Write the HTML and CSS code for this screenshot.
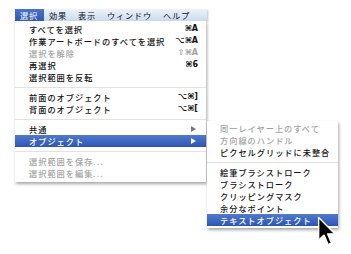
FILE: index.html
```html
<!DOCTYPE html>
<html lang="ja">
<head>
  <meta charset="UTF-8" />
  <title>選択メニュー</title>
  <link rel="stylesheet" href="styles.css">
</head>
<body>

  <div class="screen">
    <div class="menubar">
      <span class="title active">選択</span>
      <span class="title">効果</span>
      <span class="title">表示</span>
      <span class="title">ウィンドウ</span>
      <span class="title">ヘルプ</span>
    </div>

    <div class="menu">
      <div class="item"><span>すべてを選択</span><span class="key">⌘A</span></div>
      <div class="item"><span>作業アートボードのすべてを選択</span><span class="key">⌥⌘A</span></div>
      <div class="item off"><span>選択を解除</span><span class="key">⇧⌘A</span></div>
      <div class="item"><span>再選択</span><span class="key">⌘6</span></div>
      <div class="item"><span>選択範囲を反転</span></div>
      <div class="sep"></div>
      <div class="item"><span>前面のオブジェクト</span><span class="key">⌥⌘]</span></div>
      <div class="item"><span>背面のオブジェクト</span><span class="key">⌥⌘[</span></div>
      <div class="sep"></div>
      <div class="item"><span>共通</span><span class="arrow"></span></div>
      <div class="item hot"><span>オブジェクト</span><span class="arrow"></span></div>
      <div class="sep"></div>
      <div class="item off"><span>選択範囲を保存...</span></div>
      <div class="item off"><span>選択範囲を編集...</span></div>
    </div>

    <div class="menu sub">
      <div class="item off"><span>同一レイヤー上のすべて</span></div>
      <div class="item off"><span>方向線のハンドル</span></div>
      <div class="item"><span>ピクセルグリッドに未整合</span></div>
      <div class="sep"></div>
      <div class="item"><span>絵筆ブラシストローク</span></div>
      <div class="item"><span>ブラシストローク</span></div>
      <div class="item"><span>クリッピングマスク</span></div>
      <div class="item"><span>余分なポイント</span></div>
      <div class="item hot"><span>テキストオブジェクト</span></div>
    </div>

    <svg class="cursor" width="19" height="30" viewBox="0 0 13 21">
      <path d="M1 1 L1 17 L4.8 13.4 L7.6 20 L10 19 L7.3 12.5 L12.3 12.5 Z" fill="#000" stroke="#fff" stroke-width="1" stroke-linejoin="round"/>
    </svg>
  </div>

</body>
</html>
```

FILE: styles.css
```css
body {
  margin: 0; padding: 0;
  background: #fff; color: #111;
  font-family: 'Noto Sans CJK JP', sans-serif;
}
.screen {
  position: relative;
  width: 351px; height: 254px;
  padding: 9px 0 0 15px;
  box-sizing: border-box;
}
.menubar {
  display: flex; width: 192px; height: 12px;
  background: linear-gradient(#eaf2fb, #cadcef);
  font-size: 8.2px; line-height: 12px;
  letter-spacing: 0.8px;
  box-shadow: 1px 1px 2px rgba(0,0,0,0.25);
}
.title { padding: 0 6px 0 5px; white-space: nowrap; }
.title.active {
  background: linear-gradient(#4b74c9, #2e58b5);
  color: #fff;
}
.menu {
  width: 191px;
  padding: 2px 0 3px;
  background: #fff;
  box-shadow: 1px 2px 3px rgba(0,0,0,0.35);
  font-size: 8.2px;
  font-weight: 500;
  letter-spacing: 1px;
}
.item {
  display: flex; align-items: center;
  justify-content: space-between;
  height: 12px; line-height: 12px;
  padding: 0 8px 0 14px;
  white-space: nowrap;
}
.item.off { color: #a3a3a3; }
.item.hot {
  background: linear-gradient(#5179cd, #2c56b4);
  color: #fff;
}
.key {
  font-family: 'DejaVu Sans', sans-serif;
  font-size: 8px; font-weight: bold;
  letter-spacing: 0;
}
.sep {
  height: 8px;
  background: linear-gradient(#e2e2e2, #e2e2e2) center / 100% 1px no-repeat;
}
.arrow {
  width: 0; height: 0; margin-right: 2px;
  border-left: 5px solid #777;
  border-top: 3px solid transparent;
  border-bottom: 3px solid transparent;
}
.item.hot .arrow { border-left-color: #fff; }
.sub {
  position: absolute; left: 207px; top: 121px;
  width: 131px; padding: 1px 0 2px;
}
.sub .item { padding-left: 13px; }
.cursor { position: absolute; left: 317px; top: 216px; }
```
